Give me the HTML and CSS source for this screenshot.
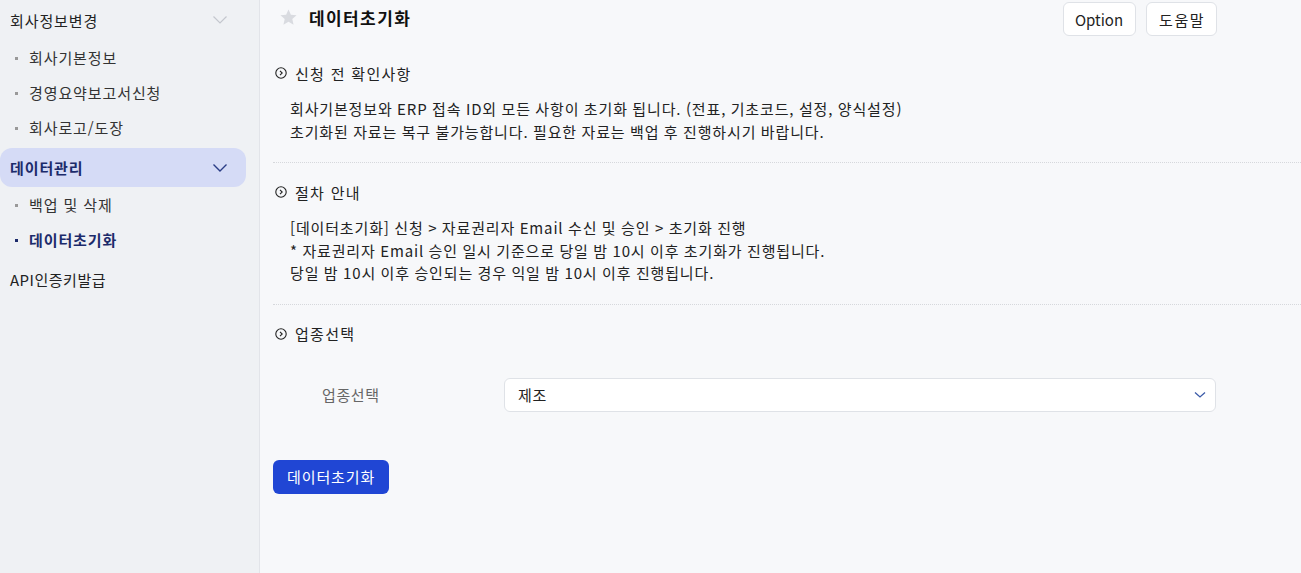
FILE: index.html
```html
<!DOCTYPE html>
<html lang="ko">
<head>
<meta charset="utf-8">
<title>데이터초기화</title>
<link rel="stylesheet" href="styles.css">
</head>
<body>
<div class="app">
  <aside class="sidebar">
    <div class="group">
      <div class="group-head">
        <span>회사정보변경</span>
        <svg class="chev" width="16" height="10" viewBox="0 0 16 10"><path d="M1.5 1.5 L8 8 L14.5 1.5" fill="none" stroke="currentColor" stroke-width="1.2"/></svg>
      </div>
      <ul class="sub">
        <li>회사기본정보</li>
        <li>경영요약보고서신청</li>
        <li>회사로고/도장</li>
      </ul>
    </div>
    <div class="group">
      <div class="group-head active">
        <span>데이터관리</span>
        <svg class="chev" width="16" height="10" viewBox="0 0 16 10"><path d="M1.5 1.5 L8 8 L14.5 1.5" fill="none" stroke="currentColor" stroke-width="1.4"/></svg>
      </div>
      <ul class="sub">
        <li>백업 및 삭제</li>
        <li class="current">데이터초기화</li>
      </ul>
    </div>
    <div class="group">
      <div class="group-head plain"><span>API인증키발급</span></div>
    </div>
  </aside>
  <main class="main">
    <header class="top">
      <div class="title">
        <svg class="star" width="19" height="19" viewBox="0 0 24 24"><path d="M12 1.8l3 6.6 7.2.8-5.4 4.8 1.6 7.1L12 17.5l-6.4 3.6 1.6-7.1L1.8 9.2 9 8.4z" fill="#d9dbe0"/></svg>
        <h1>데이터초기화</h1>
      </div>
      <div class="actions">
        <button class="btn-outline">Option</button>
        <button class="btn-outline ko">도움말</button>
      </div>
    </header>

    <section class="section">
      <h2 class="sec-title"><svg class="circ" width="12" height="12" viewBox="0 0 12 12"><circle cx="6" cy="6" r="5.2" fill="none" stroke="#222" stroke-width="1.1"/><path d="M5 3.8 L7.2 6 L5 8.2" fill="none" stroke="#222" stroke-width="1.1"/></svg>신청 전 확인사항</h2>
      <div class="sec-body">
        <p>회사기본정보와 ERP 접속 ID외 모든 사항이 초기화 됩니다. (전표, 기초코드, 설정, 양식설정)</p>
        <p>초기화된 자료는 복구 불가능합니다. 필요한 자료는 백업 후 진행하시기 바랍니다.</p>
      </div>
    </section>

    <section class="section">
      <h2 class="sec-title"><svg class="circ" width="12" height="12" viewBox="0 0 12 12"><circle cx="6" cy="6" r="5.2" fill="none" stroke="#222" stroke-width="1.1"/><path d="M5 3.8 L7.2 6 L5 8.2" fill="none" stroke="#222" stroke-width="1.1"/></svg>절차 안내</h2>
      <div class="sec-body">
        <p>[데이터초기화] 신청 &gt; 자료권리자 Email 수신 및 승인 &gt; 초기화 진행</p>
        <p>* 자료권리자 Email 승인 일시 기준으로 당일 밤 10시 이후 초기화가 진행됩니다.</p>
        <p>당일 밤 10시 이후 승인되는 경우 익일 밤 10시 이후 진행됩니다.</p>
      </div>
    </section>

    <section class="section last">
      <h2 class="sec-title"><svg class="circ" width="12" height="12" viewBox="0 0 12 12"><circle cx="6" cy="6" r="5.2" fill="none" stroke="#222" stroke-width="1.1"/><path d="M5 3.8 L7.2 6 L5 8.2" fill="none" stroke="#222" stroke-width="1.1"/></svg>업종선택</h2>
      <div class="form-row">
        <label class="form-label">업종선택</label>
        <div class="select">
          <span>제조</span>
          <svg width="12" height="8" viewBox="0 0 12 8"><path d="M1 1.5 L6 6 L11 1.5" fill="none" stroke="#3b5aa8" stroke-width="1.3"/></svg>
        </div>
      </div>
    </section>

    <button class="btn-primary">데이터초기화</button>
  </main>
</div>
</body>
</html>
```

FILE: styles.css
```css
* { box-sizing: border-box; }
html, body { margin: 0; padding: 0; height: 100%; }
body {
  font-family: "Noto Sans CJK KR", "Noto Sans", sans-serif;
  font-size: 14px;
  color: #222;
  background: #f7f8fa;
}
.app { display: flex; height: 573px; overflow: hidden; }

.sidebar {
  width: 260px;
  flex: none;
  background: #eff1f4;
  border-right: 1px solid #e2e4e9;
  padding-right: 13px;
}
.group-head {
  display: flex;
  align-items: center;
  justify-content: space-between;
  height: 39px;
  padding: 0 18px 0 10px;
  font-size: 15px;
  letter-spacing: 0.9px;
  color: #222;
}
.group:first-child .group-head { height: 40px; }
.group-head .chev { color: #c4c7ce; }
.group-head.active {
  background: #d5dbf6;
  color: #1c2b6b;
  font-weight: 700;
  border-radius: 12px;
  margin-top: 1px;
}
.group-head.active .chev { color: #2a3d86; }
.group-head.plain { height: 40px; letter-spacing: 0.5px; }
.sub { list-style: none; margin: 0; padding: 0 0 2px 0; }
.sub li {
  position: relative;
  height: 35px;
  line-height: 35px;
  padding-left: 29px;
  font-size: 15px;
  letter-spacing: 0.9px;
  color: #333;
}
.sub li::before {
  content: "";
  position: absolute;
  left: 15px;
  top: 17px;
  width: 3px;
  height: 3px;
  background: #999;
}
.sub li.current { color: #1c2b6b; font-weight: 700; }
.sub li.current::before { background: #1c2b6b; }

.main {
  flex: 1;
  padding: 0 0 0 13px;
  min-width: 0;
}
.top {
  display: flex;
  justify-content: space-between;
  align-items: flex-start;
  padding: 2px 84px 0 0;
  height: 50px;
}
.title { display: flex; align-items: center; gap: 11px; padding: 0 0 0 6px; height: 30px; }
.title h1 { margin: 0; font-size: 17px; font-weight: 700; color: #111; letter-spacing: 1.4px; }
.actions { display: flex; gap: 10px; }
.btn-outline {
  font-family: inherit;
  font-size: 15px;
  height: 34px;
  padding: 0 12px 0 11px;
  background: #fff;
  border: 1px solid #dfe2e7;
  border-radius: 6px;
  color: #222;
}
.btn-outline.ko { letter-spacing: 1.5px; padding: 0 11px 0 12px; }

.section { border-bottom: 1px dotted #d6d8dc; padding: 18px 0 19px 2px; }
.section:first-of-type { padding-top: 12px; }
.section.last { border-bottom: none; padding-bottom: 0; }
.sec-title {
  display: flex;
  align-items: center;
  gap: 8px;
  margin: 0;
  font-size: 15px;
  font-weight: 400;
  letter-spacing: 1.3px;
  height: 22px;
}
.sec-body { padding: 14px 0 0 15px; }
.sec-body p { margin: 0; line-height: 22.5px; font-size: 15px; letter-spacing: 0.85px; word-spacing: -0.5px; }

.form-row {
  display: flex;
  align-items: center;
  margin: 33px 85px 0 0;
}
.form-label {
  width: 229px;
  padding-left: 47px;
  font-size: 15px;
  letter-spacing: 0.6px;
  color: #666;
}
.select {
  flex: 1;
  height: 34px;
  display: flex;
  align-items: center;
  justify-content: space-between;
  padding: 0 9px 0 13px;
  background: #fff;
  border: 1px solid #dfe2e7;
  border-radius: 6px;
  font-size: 15px;
  letter-spacing: 0.6px;
}

.btn-primary {
  margin-top: 48px;
  font-family: inherit;
  font-size: 15px;
  letter-spacing: 0.9px;
  height: 34px;
  padding: 0 14px;
  background: #2046d4;
  color: #fff;
  border: none;
  border-radius: 6px;
}
```
